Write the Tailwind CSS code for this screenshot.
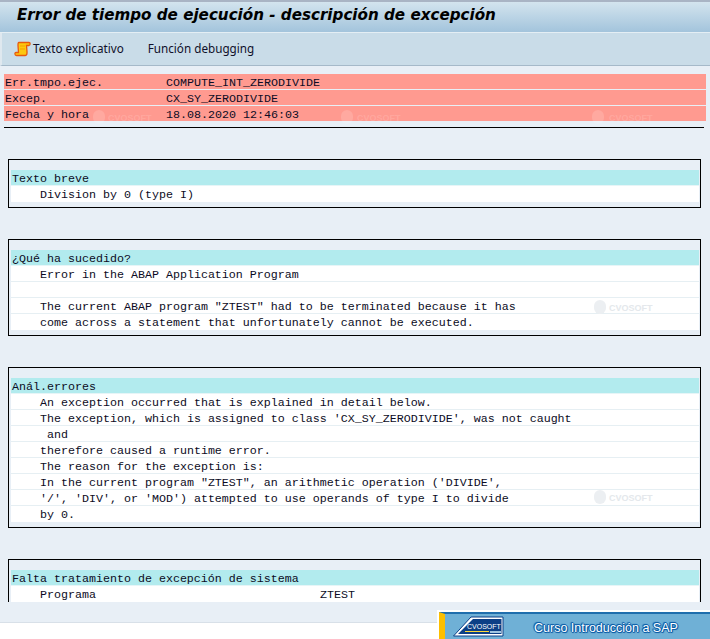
<!DOCTYPE html>
<html lang="es">
<head>
<meta charset="UTF-8">
<title>Error de tiempo de ejecución</title>
<script src="https://cdn.jsdelivr.net/npm/@tailwindcss/browser@4"></script>
</head>
<body class="w-[710px] h-[639px] overflow-hidden bg-[#e8eff6] relative">

  <!-- Title bar -->
  <div class="h-[33px] border-t-2 border-[#a9b4c4] border-b border-b-[#e4eef4] bg-gradient-to-b from-[#d3e4ee] to-[#a3c4dc] pl-[17px] pb-[3px] flex items-center">
    <h1 class="font-['DejaVu_Sans'] font-bold italic text-[15.15px] text-black">Error de tiempo de ejecución - descripción de excepción</h1>
  </div>

  <!-- Toolbar -->
  <div class="h-[33px] bg-[#c9dce8] border-b border-[#a5b9c9] border-l-2 border-l-[#dfe8ef] pl-[12px] flex items-center font-['Noto_Sans'] text-[11.7px] text-[#10102a]">
    <svg class="w-[17px] h-[16px] mr-[2px]" viewBox="0 0 17 16">
      <path d="M5 1.500h10c1.500 0 1.500 2.500 0 3h-2.500l.5 6v1.500c0 1.500-1 2.500-2 2.500H2.500C.5 14.500.5 11.500 2 11.500h2.500l-.5-7C4 3 4 1.500 5 1.500z" fill="#fdc80f" stroke="#e8590c" stroke-width="1.300"/>
      <path d="M6 5h5M6 8h5" stroke="#f59f00" stroke-width="1"/>
    </svg>
    <span>Texto explicativo</span>
    <span class="ml-[24px]">Función debugging</span>
  </div>

  <div class="font-['Liberation_Mono'] text-[11.67px] leading-[18px] text-[#0c0c24]">

    <!-- Header block -->
    <div class="mt-[8px] mx-[4px] flex flex-col gap-px">
      <div class="h-[15px] leading-[19px] bg-[#ff9a90] pl-px flex"><span class="w-[161px]">Err.tmpo.ejec.</span><span>COMPUTE_INT_ZERODIVIDE</span></div>
      <div class="h-[15px] leading-[19px] bg-[#ff9a90] pl-px flex"><span class="w-[161px]">Excep.</span><span>CX_SY_ZERODIVIDE</span></div>
      <div class="h-[15px] leading-[19px] bg-[#ff9a90] pl-px flex"><span class="w-[161px]">Fecha y hora</span><span>18.08.2020 12:46:03</span></div>
    </div>
    <div class="mt-[6px] ml-[4px] w-[700px] h-px bg-black"></div>

    <!-- Texto breve -->
    <section class="mt-[31px] ml-[8px] w-[693px] h-[49px] border border-black pt-[10px] pl-[2px] pr-px">
      <div class="h-[16px] bg-[#b2ebee] border-b border-[#e6f5f7] pl-px">Texto breve</div>
      <div class="h-[16px] bg-white pl-[29px]">Division by 0 (type I)</div>
    </section>

    <!-- Qué ha sucedido -->
    <section class="mt-[31px] ml-[8px] w-[693px] h-[97px] border border-black pt-[10px] pl-[2px] pr-px">
      <div class="h-[16px] bg-[#b2ebee] border-b border-[#e6f5f7] pl-px">¿Qué ha sucedido?</div>
      <div class="h-[16px] bg-white border-b border-[#e6eff3] pl-[29px]">Error in the ABAP Application Program</div>
      <div class="h-[16px] bg-white border-b border-[#e6eff3] pl-[29px]"></div>
      <div class="h-[16px] bg-white border-b border-[#e6eff3] pl-[29px]">The current ABAP program "ZTEST" had to be terminated because it has</div>
      <div class="h-[16px] bg-white pl-[29px]">come across a statement that unfortunately cannot be executed.</div>
    </section>

    <!-- Anál.errores -->
    <section class="mt-[31px] ml-[8px] w-[693px] h-[161px] border border-black pt-[10px] pl-[2px] pr-px">
      <div class="h-[16px] bg-[#b2ebee] border-b border-[#e6f5f7] pl-px">Anál.errores</div>
      <div class="h-[16px] bg-white border-b border-[#e6eff3] pl-[29px]">An exception occurred that is explained in detail below.</div>
      <div class="h-[16px] bg-white border-b border-[#e6eff3] pl-[29px]">The exception, which is assigned to class 'CX_SY_ZERODIVIDE', was not caught</div>
      <div class="h-[16px] bg-white border-b border-[#e6eff3] pl-[36px]">and</div>
      <div class="h-[16px] bg-white border-b border-[#e6eff3] pl-[29px]">therefore caused a runtime error.</div>
      <div class="h-[16px] bg-white border-b border-[#e6eff3] pl-[29px]">The reason for the exception is:</div>
      <div class="h-[16px] bg-white border-b border-[#e6eff3] pl-[29px]">In the current program "ZTEST", an arithmetic operation ('DIVIDE',</div>
      <div class="h-[16px] bg-white border-b border-[#e6eff3] pl-[29px]">'/', 'DIV', or 'MOD') attempted to use operands of type I to divide</div>
      <div class="h-[16px] bg-white pl-[29px]">by 0.</div>
    </section>

    <!-- Falta tratamiento -->
    <section class="mt-[31px] ml-[8px] w-[693px] border border-black border-b-0 pt-[10px] pl-[2px] pr-px">
      <div class="h-[16px] bg-[#b2ebee] border-b border-[#e6f5f7] pl-px">Falta tratamiento de excepción de sistema</div>
      <div class="h-[16px] bg-white pl-[29px] flex"><span class="w-[280px]">Programa</span><span>ZTEST</span></div>
    </section>
  </div>

  <!-- Watermarks -->
  <div class="absolute left-[93px] top-[110px] w-[12px] h-[14px] rounded-full bg-white/15"></div>
  <div class="absolute left-[341px] top-[110px] w-[12px] h-[14px] rounded-full bg-white/15"></div>
  <div class="absolute left-[592px] top-[110px] w-[12px] h-[14px] rounded-full bg-white/15"></div>
  <span class="absolute left-[108px] top-[112px] font-['Liberation_Sans'] font-bold text-[9px] text-white/15">CVOSOFT</span>
  <span class="absolute left-[357px] top-[112px] font-['Liberation_Sans'] font-bold text-[9px] text-white/15">CVOSOFT</span>
  <span class="absolute left-[609px] top-[112px] font-['Liberation_Sans'] font-bold text-[9px] text-white/15">CVOSOFT</span>
  <div class="absolute left-[594px] top-[300px] w-[12px] h-[14px] rounded-full bg-[#eceff2]"></div>
  <div class="absolute left-[594px] top-[490px] w-[12px] h-[14px] rounded-full bg-[#eceff2]"></div>
  <span class="absolute left-[609px] top-[302px] font-['Liberation_Sans'] font-bold text-[9px] text-[#e4e8ec]">CVOSOFT</span>
  <span class="absolute left-[609px] top-[492px] font-['Liberation_Sans'] font-bold text-[9px] text-[#e4e8ec]">CVOSOFT</span>

  <!-- Bottom strip under the window -->
  <div class="absolute left-0 top-[622px] w-[437px] h-[17px] bg-white border-t border-[#d8e0e8]"></div>

  <!-- Course banner -->
  <div class="absolute left-[437px] top-[610px] w-[273px] h-[29px] bg-white pl-[2px] pt-[2px]">
    <div class="h-[27px] bg-[#6fb0d6] border-t-2 border-[#1f6ead] border-l-[6px] border-l-[#fdbf00] flex items-center">
      <svg class="w-[51px] h-[21px] ml-[8px] shrink-0" viewBox="0 0 51 21">
        <path d="M.500 20 L18 1 H50 V20 Z" fill="#fff" stroke="#0c3f86" stroke-width="1"/>
        <path d="M5 18 L20 3 H48.500 V18 Z" fill="#0c3f86"/>
        <text x="14" y="12.500" font-family="Liberation Sans" font-size="7" fill="#fff">CVOSOFT</text>
        <rect x="12" y="15" width="24" height="1" fill="#fdd835"/>
        <rect x="37" y="15" width="11" height="2" fill="#9fc4e0"/>
      </svg>
      <span class="ml-[30px] pt-[3px] font-['Liberation_Sans'] text-[12.5px] text-white [text-shadow:1px_0_0_#0b5ea8,-1px_0_0_#0b5ea8,0_1px_0_#0b5ea8,0_-1px_0_#0b5ea8,1px_1px_1px_#0b5ea8,-1px_-1px_1px_#0b5ea8]">Curso Introducción a SAP</span>
    </div>
  </div>
</body>
</html>
